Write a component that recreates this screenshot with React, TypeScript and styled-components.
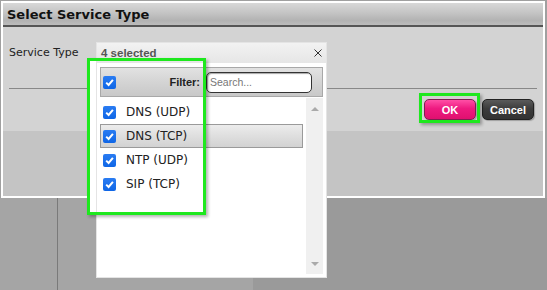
import React from 'react';
import styled, { createGlobalStyle } from 'styled-components';

const GlobalStyle = createGlobalStyle`
  html, body {
    margin: 0;
    padding: 0;
    background: #a0a0a0;
  }
  * {
    box-sizing: border-box;
  }
`;

const services = ['DNS (UDP)', 'DNS (TCP)', 'NTP (UDP)', 'SIP (TCP)'];

const Check = () => (
  <CheckBox>
    <svg width="13" height="13" viewBox="0 0 13 13">
      <path d="M3.2 6.6 L5.6 9 L9.9 3.9" fill="none" stroke="#fff" strokeWidth="2" />
    </svg>
  </CheckBox>
);

const App = () => (
  <Page>
    <GlobalStyle />
    <Dialog>
      <TitleBar>Select Service Type</TitleBar>
      <Content>
        <Label>Service Type</Label>
        <Divider />
        <ButtonRow>
          <Button $variant="primary">OK</Button>
          <Button>Cancel</Button>
        </ButtonRow>
      </Content>
      <Footer />
    </Dialog>
    <Backdrop>
      <SideColumn />
      <MainColumn />
      <RestColumn />
    </Backdrop>

    <Backing />
    <Popup>
      <PopupHeader>
        <span>4 selected</span>
        <svg width="8" height="8" viewBox="0 0 8 8">
          <path d="M0.5 0.5 L7.5 7.5 M7.5 0.5 L0.5 7.5" stroke="#333" strokeWidth="1" />
        </svg>
      </PopupHeader>
      <FilterBar>
        <Check />
        <FilterLabel>Filter:</FilterLabel>
        <SearchInput placeholder="Search..." />
      </FilterBar>
      <ListArea>
        <List>
          {services.map((s, i) => (
            <Item key={s} $hover={i === 1}>
              <Check />
              <span>{s}</span>
            </Item>
          ))}
        </List>
        <ScrollBar>
          <Arrow $dir="up" />
          <Arrow $dir="down" />
        </ScrollBar>
      </ListArea>
    </Popup>

    <Highlight $left={87} $top={58} $width={119} $height={157} />
    <Highlight $left={419} $top={93} $width={61} $height={30} />
  </Page>
);

const Page = styled.div`
  position: relative;
  width: 547px;
  height: 290px;
  overflow: hidden;
  padding-top: 1px;
  background: #a0a0a0;
`;

const Dialog = styled.div`
  margin-left: 1px;
  width: 544px;
  height: 197px;
  border: 2px solid #fff;
  display: flex;
  flex-direction: column;
`;

const TitleBar = styled.div`
  height: 24px;
  padding-left: 4px;
  display: flex;
  align-items: center;
  border-bottom: 2px solid #555;
  background: linear-gradient(#d8d8d8, #c4c4c4 45%, #b2b2b2 80%, #bcbcbc);
  font-family: 'DejaVu Sans', sans-serif;
  font-weight: bold;
  font-size: 13px;
  color: #111;
`;

const Content = styled.div`
  height: 104px;
  padding: 17px 6px 0 6px;
  background: #d3d3d3;
  display: flex;
  flex-direction: column;
`;

const Label = styled.div`
  height: 18px;
  line-height: 18px;
  font-family: 'DejaVu Sans', sans-serif;
  font-size: 11px;
  color: #222;
`;

const Divider = styled.div`
  margin-top: 26px;
  height: 1px;
  background: #888;
`;

const ButtonRow = styled.div`
  margin-top: 10px;
  padding-right: 3px;
  display: flex;
  justify-content: flex-end;
  gap: 6px;
`;

const Button = styled.div<{ $variant?: 'primary' }>`
  width: 52px;
  height: 21px;
  border-radius: 5px;
  display: flex;
  align-items: center;
  justify-content: center;
  font-family: 'Liberation Sans', Arial, sans-serif;
  font-weight: bold;
  font-size: 11px;
  color: #fff;
  border: 1px solid ${({ $variant }) => ($variant === 'primary' ? '#7a2050' : '#222')};
  background: ${({ $variant }) =>
    $variant === 'primary'
      ? 'linear-gradient(#ff4fa6, #ee1a80 45%, #e0106f)'
      : 'linear-gradient(#5a5a5a, #3c3c3c 45%, #333)'};
  box-shadow: 1px 1px 1px rgba(0, 0, 0, 0.25);
`;

const Footer = styled.div`
  flex: 1;
  background: #c4c4c4;
`;

const Backdrop = styled.div`
  height: 92px;
  display: flex;
`;

const SideColumn = styled.div`
  width: 58px;
  background: #a5a5a5;
  border-right: 1px solid #7a7a7a;
`;

const MainColumn = styled.div`
  width: 195px;
  background: #a5a5a5;
`;

const RestColumn = styled.div`
  flex: 1;
  background: #9a9a9a;
`;

const Backing = styled.div`
  position: absolute;
  left: 89px;
  top: 60px;
  width: 116px;
  height: 154px;
  background: #fff;
`;

const Popup = styled.div`
  position: absolute;
  left: 96px;
  top: 42px;
  width: 231px;
  height: 236px;
  background: #fff;
  border: 1px solid #e4e4e4;
  display: flex;
  flex-direction: column;
`;

const PopupHeader = styled.div`
  height: 20px;
  padding: 0 4px 0 4px;
  display: flex;
  align-items: center;
  justify-content: space-between;
  background: linear-gradient(#f2f2f2, #e6e6e6);
  font-family: 'Liberation Sans', Arial, sans-serif;
  font-weight: bold;
  font-size: 11.5px;
  color: #555;
`;

const FilterBar = styled.div`
  margin: 4px 3px 0 3px;
  height: 30px;
  padding: 0 10px 0 2px;
  display: flex;
  align-items: center;
  border: 1px solid #a8a8a8;
  background: linear-gradient(#e2e2e2, #d4d4d4 50%, #c8c8c8);
`;

const FilterLabel = styled.span`
  flex: 1;
  text-align: right;
  padding-right: 6px;
  font-family: 'Liberation Sans', Arial, sans-serif;
  font-weight: bold;
  font-size: 11px;
  color: #222;
`;

const SearchInput = styled.input`
  width: 106px;
  height: 21px;
  padding: 0 3px;
  border: 1px solid #333;
  border-radius: 5px;
  background: #fff;
  box-shadow: inset 1px 1px 1px rgba(0, 0, 0, 0.35);
  font-family: 'Liberation Sans', Arial, sans-serif;
  font-size: 10.5px;
  outline: none;

  &::placeholder {
    color: #777;
  }
`;

const ListArea = styled.div`
  flex: 1;
  display: flex;
  padding: 1px 3px 3px 3px;
`;

const List = styled.ul`
  margin: 0;
  padding: 2px 0 0 0;
  width: 203px;
  list-style: none;
`;

const Item = styled.li<{ $hover?: boolean }>`
  height: 24px;
  padding-left: 2px;
  display: flex;
  align-items: center;
  gap: 10px;
  font-family: 'DejaVu Sans', sans-serif;
  font-size: 12px;
  color: #222;
  border: 1px solid ${({ $hover }) => ($hover ? '#9a9a9a' : 'transparent')};
  background: ${({ $hover }) => ($hover ? 'linear-gradient(#ececec, #dcdcdc 60%, #d2d2d2)' : 'transparent')};
`;

const CheckBox = styled.span`
  width: 13px;
  height: 13px;
  flex: none;
  border-radius: 2px;
  display: flex;
  background: linear-gradient(#2a7cf2, #0f66e6);
`;

const ScrollBar = styled.div`
  margin-left: 3px;
  width: 17px;
  background: #f0f0f0;
  display: flex;
  flex-direction: column;
  justify-content: space-between;
  align-items: center;
  padding: 9px 0 8px 0;
`;

const Arrow = styled.div<{ $dir: 'up' | 'down' }>`
  width: 0;
  height: 0;
  border-left: 4px solid transparent;
  border-right: 4px solid transparent;
  ${({ $dir }) => ($dir === 'up' ? 'border-bottom: 4px solid #aaa;' : 'border-top: 4px solid #aaa;')}
`;

const Highlight = styled.div<{ $left: number; $top: number; $width: number; $height: number }>`
  position: absolute;
  left: ${({ $left }) => $left}px;
  top: ${({ $top }) => $top}px;
  width: ${({ $width }) => $width}px;
  height: ${({ $height }) => $height}px;
  border: 3px solid #1ee81e;
  box-shadow: 2px 2px 3px rgba(0, 0, 0, 0.3);
  pointer-events: none;
`;

export default App;
